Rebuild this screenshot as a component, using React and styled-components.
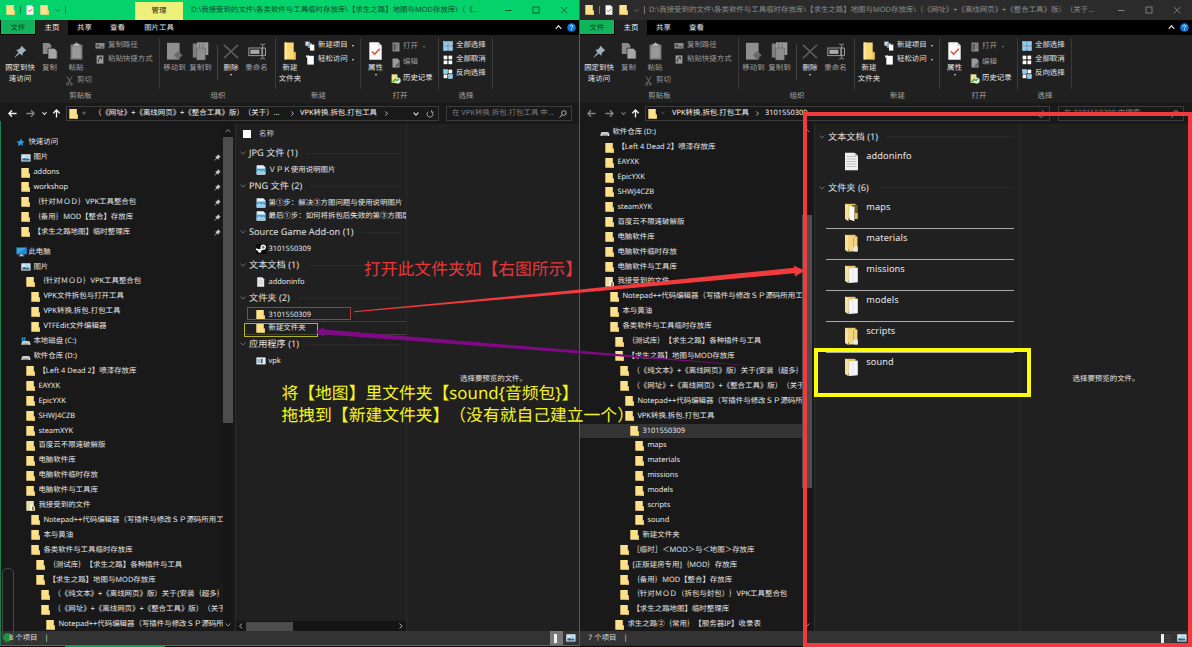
import React from 'react';
import styled, { createGlobalStyle, css } from 'styled-components';

const Global = createGlobalStyle`
  * { box-sizing: border-box; }
  html, body { margin: 0; padding: 0; background: #0b0f0d; }
  body {
    width: 1192px; height: 647px; overflow: hidden;
    font-family: "Noto Sans", "Noto Sans CJK SC", sans-serif;
    font-size: 7.45px; line-height: 11px; color: #e6e6e6;
    text-rendering: geometricPrecision;
    text-spacing-trim: space-all;
    white-space: nowrap;
  }
  svg { display: block; flex: none; }
`;

/* ---------- layout ---------- */
const Desktop = styled.div`
  position: relative; display: flex; width: 1192px; height: 647px; overflow: hidden;
`;
const Window = styled.section`
  width: ${p => p.$w}px; height: 646px; flex: none; display: flex; flex-direction: column;
  background: #191919; border-bottom: 1px solid ${p => (p.$active ? '#14905a' : '#2b2b2b')};
  box-shadow: ${p => (p.$active ? 'inset 1px 0 #1c7d50, 1px 0 #1c7d50' : 'none')};
  position: relative; z-index: ${p => (p.$active ? 1 : 0)};
`;
const TitleBar = styled.header`
  height: 20px; display: flex; align-items: center; padding-left: 6px;
  background: ${p => (p.$active ? '#04d36c' : '#2b2b2b')};
  color: ${p => (p.$active ? '#0a4a29' : '#8d8d8d')};
`;
const QuickTools = styled.div`
  display: flex; align-items: center; gap: 6px; width: ${p => p.$w}px; flex: none;
`;
const TinyBar = styled.i`width: 1px; height: 8px; background: ${p => p.$c}; margin: 0 -1px;`;
const ContextTab = styled.div`
  align-self: flex-end; width: 48px; height: 18px; line-height: 18px; text-align: center;
  background: #eff07c; color: #24240e; margin-right: 8px; flex: none;
`;
const Title = styled.div`width: ${p => p.$w}px; letter-spacing: ${p => p.$ls || 0}px; flex: none;`;
const WinControls = styled.div`
  margin-left: auto; display: flex; align-items: center; gap: 20px; padding-right: ${p => p.$pr}px;
`;
const TabBar = styled.nav`
  height: 15px; display: flex; align-items: stretch; background: #000; padding: 0 3px 0 1px;
`;
const Tab = styled.div`
  width: ${p => p.$w || 33}px; line-height: 16px; text-align: center; color: #e2e2e2;
  ${p => p.$kind === 'file' && css`height: 14px; background: #12b35b; color: #063c20; margin-right: 1px;`}
  ${p => p.$kind === 'active' && css`background: #202020; color: #fff;`}
`;
const TabEnd = styled.div`margin-left: auto; display: flex; align-items: center; gap: 5px;`;

const Ribbon = styled.div`height: 68px; flex: none; display: flex; background: #202020; padding-left: 1px;`;
const Group = styled.div`
  position: relative; width: ${p => p.$w}px; display: flex; flex-direction: column; flex: none;
  &::after { content: ''; position: absolute; right: 0; top: 3px; height: 51px; width: 1px; background: #3a3a3a; }
`;
const GroupBody = styled.div`height: 54px; display: flex; padding-left: ${p => p.$pl ?? 2}px;`;
const GroupLabel = styled.div`text-align: center; color: #a8a8a8; line-height: 14px; height: 14px;`;
const BigButton = styled.div`
  width: ${p => p.$w}px; display: flex; flex-direction: column; align-items: center; text-align: center;
  color: ${p => (p.$off ? '#a2a2a2' : '#e4e4e4')};
`;
const IconSlot = styled.div`height: 28px; padding-top: 4px; display: flex; justify-content: center; align-items: center;`;
const SmallCol = styled.div`
  display: flex; flex-direction: column; padding-top: ${p => p.$pt || 5}px; margin-left: ${p => p.$ml || 0}px; gap: ${p => p.$gap}px;
`;
const SmallButton = styled.div`
  display: flex; align-items: center; gap: ${p => p.$sp || 3}px; height: 11px; line-height: 11px;
  margin: ${p => p.$m || 0};
  color: ${p => (p.$off ? '#9c9c9c' : '#e4e4e4')};
`;
const InnerRule = styled.i`width: 1px; height: 35px; margin: 10px 1px 0 3px; background: #454545;`;
const Caret = styled.i`
  width: 0; height: 0; border: 1.5px solid transparent; border-top: 2px solid ${p => p.$c || '#ddd'};
  border-bottom: 0; margin: ${p => p.$m || '0 0 0 2px'};
`;

const AddressRow = styled.div`
  height: 18px; flex: none; display: flex; align-items: flex-start; padding: 3px 0 0 7px;
  background: #191919;
`;
const NavArrows = styled.div`display: flex; align-items: center; height: 14px; width: 59px; flex: none;`;
const ArrowSlot = styled.div`width: ${p => p.$w}px; display: flex; justify-content: center;`;
const Field = styled.div`
  height: 15px; width: ${p => p.$w}px; border: 1px solid #3c3c3c; display: flex; align-items: center;
  margin-right: ${p => p.$mr || 0}px; padding: 0 4px 0 ${p => p.$pl || 2}px; flex: none; color: ${p => p.$c || '#f2f2f2'};
  letter-spacing: ${p => p.$ls || 0}px;
`;
const Crumb = styled.span`width: ${p => p.$w}px; flex: none; color: ${p => p.$c || 'inherit'}; letter-spacing: ${p => p.$ls || 0}px;`;
const FieldEnd = styled.span`margin-left: auto; display: flex; gap: 7px; align-items: center;`;

const Body = styled.div`flex: 1; display: flex; min-height: 0;`;
const Tree = styled.aside`
  width: 223px; overflow: hidden; padding: ${p => p.$pt}px 0 0 1px; flex: none;
`;
const TreeRow = styled.div`
  height: 14.92px; display: flex; align-items: center; line-height: 14.92px;
  padding-left: ${p => 15 + p.$lvl * 5}px; margin-top: ${p => p.$mt || 0}px;
  background: ${p => (p.$sel ? '#333' : 'transparent')};
`;
const TreeIcon = styled.span`width: 12.4px; flex: none; display: flex; justify-content: flex-start;`;
const TreeText = styled.span`letter-spacing: ${p => p.$ls || 0}px;`;
const PinSlot = styled.span`margin-left: auto; padding-right: 2px;`;
const VScroll = styled.div`
  width: 10px; flex: none; display: flex; flex-direction: column; align-items: center; background: #171717;
  padding: 7px 0 3px;
`;
const VTrack = styled.div`flex: 1; width: 10px; padding-top: ${p => p.$top}px;`;
const VThumb = styled.div`height: ${p => p.$h}px; background: #4d4d4d;`;

const ListPane = styled.main`
  width: ${p => p.$w}px; margin-left: 2px; flex: none; display: flex; flex-direction: column;
  background: #202020; border-left: 1px solid #2c2c2c; border-right: 1px solid #2b2b2b; overflow: hidden;
  margin-top: 3px;
`;
const ColumnHead = styled.div`
  height: 19.3px; display: flex; align-items: center; gap: 8px; padding: 1px 0 0 7px; color: #cfcfcf;
`;
const ColumnSpace = styled.div`height: 2.5px; flex: none;`;
const CheckBox = styled.i`width: 8px; height: 8px; background: #fff;`;
const GroupHead = styled.div`
  height: 20px; display: flex; align-items: center; gap: 3px; font-size: ${p => p.$fs || 9.2}px; line-height: 20px;
  padding-left: 4px; color: #e2e2e2; letter-spacing: ${p => p.$ls || 0}px;
  &::after { content: ''; flex: 1; height: 1px; background: #2a2a2a; margin: 0 6px 0 5px; }
`;
const ListItem = styled.div`
  height: 13px; display: flex; align-items: center; line-height: 14px; margin-left: 9px; padding-left: 11px;
  box-shadow: ${p => (p.$line ? '0 0.6px #55584c' : 'none')};
`;
const ListIcon = styled.span`width: 12.5px; flex: none; display: flex; justify-content: flex-start;`;
const HScroll = styled.div`
  margin-top: auto; height: 10px; display: flex; align-items: center; background: #151515; padding: 0 2px;
`;
const HThumb = styled.i`width: 47px; height: 9px; background: #4d4d4d; margin: 0 auto 0 2px;`;
const Preview = styled.div`
  flex: 1; background: #202020; margin-top: 3px; text-align: center; padding: 249.5px 0 0 ${p => p.$pl}px;
`;
const TileItem = styled.div`
  height: 31px; display: flex; align-items: flex-start; margin: 0 5px 0 11px; padding-left: 18px;
  border-bottom: 1px solid ${p => (p.$line ? '#a9a9a9' : 'transparent')};
`;
const TileIcon = styled.span`width: 22.3px; padding-top: 5px; flex: none;`;
const TileText = styled.span`font-size: 9.2px; line-height: 18px; letter-spacing: 0.1px;`;

const StatusBar = styled.footer`
  height: 14px; flex: none; display: flex; align-items: center; background: #333; color: #dedede;
  margin: 0 0 0 1px; padding-left: ${p => p.$pl}px; gap: 7px;
`;
const StatusText = styled.span`position: relative; z-index: 1;`;
const ViewButtons = styled.div`margin-left: auto; display: flex; align-items: center; height: 14px; padding-right: ${p => p.$pr}px; gap: ${p => p.$gap}px;`;
const ViewButton = styled.div`
  width: 13px; height: 14px; display: flex; align-items: center; justify-content: center;
  background: ${p => (p.$on ? '#777' : 'transparent')};
`;

/* ---------- annotation layer ---------- */
const Annotations = styled.div`position: absolute; inset: 0; z-index: 2;`;
const Mark = styled.div`
  position: absolute; left: ${p => p.$x}px; top: ${p => p.$y}px; width: ${p => p.$w}px; height: ${p => p.$h}px;
  border: ${p => p.$b}px solid ${p => p.$c};
`;
const Note = styled.div`
  position: absolute; left: ${p => p.$x}px; top: ${p => p.$y}px; color: ${p => p.$c};
  font-size: 16.8px; line-height: 22px;
`;
const Arrows = styled.svg`position: absolute; left: 0; top: 0; pointer-events: none;`;
const Gauge = styled.div`
  position: absolute; left: 2px; top: 568px; width: 12px; height: 76px; border: 1.5px solid #4a4646; border-radius: 5px;
`;
const GaugeDot = styled.i`position: absolute; left: 3px; top: 633px; width: 9px; height: 9px; border-radius: 5px; background: #22913f;`;
const TaskLine = styled.i`position: absolute; left: 65px; top: 645px; width: 100px; height: 2px; background: #0a9c55;`;

/* ---------- icons ---------- */
const Folder = ({ w = 9, h = 10, kind }) => (
  <svg width={w} height={h} viewBox="0 0 9 10">
    <path d="M0.3 0H7.8V5.4H8.8V9.7H0.3Z" fill={kind === 'shared' ? '#ebe0a4' : '#fce08a'} />
    <path d="M7.5 5.4H8.8V9.7H6.4V9H7.5Z" fill="#f6d068" />
    {kind === 'shared' && <path d="M4.4 3.6H7.2V9.6H4.4Z" fill="#fff" />}
    {kind === 'shared' && <path d="M6 5.5H7.6V9.6H6Z" fill="#777" />}
  </svg>
);
const Star = () => (
  <svg width="9" height="9" viewBox="0 0 9 9"><path d="M5.2 0.6L6 3 8.6 3.4 6.5 5 7 7.8 4.6 6.5 1.8 8.6 2.5 5.6 0.4 3.6 3.6 3.3Z" fill="#2f9be6" /></svg>
);
const Picture = () => (
  <svg width="10" height="8" viewBox="0 0 10 8">
    <rect x=".3" y=".3" width="9.2" height="7.2" fill="#eef5fa" />
    <rect x="1.3" y="1.3" width="7.2" height="5.2" fill="#a9d6f2" />
    <path d="M1.3 6.5V4.9L3.4 4 5.5 5.1 7 4.6 8.5 5.2V6.5Z" fill="#33627f" /><circle cx="3" cy="2.7" r=".9" fill="#fff" />
  </svg>
);
const Monitor = () => (
  <svg width="11" height="10" viewBox="0 0 11 10"><path d="M.5.5H10.5V7.2H.5Z" fill="#38a7ea" /><path d="M.5 7.2L10.5.5V7.2Z" fill="#2389d2" /><path d="M4.4 7.2H6.6V8.4H8.3V9.3H2.7V8.4H4.4Z" fill="#b9d7ea" /></svg>
);
const Drive = ({ os }) => (
  <svg width="10" height="9" viewBox="0 0 10 9">
    <path d="M1.6 4L0.5 6V8H9.3V6L8.2 4Z" fill="#c9cdcf" /><path d="M.9 6.1H8.9V7.6H.9Z" fill="#eef0f0" /><rect x="1.6" y="6.7" width="6.3" height=".8" fill="#333" />
    {os && <path d="M.6.6H2.2V2.1H.6ZM2.6.6H4.4V2.1H2.6ZM.6 2.5H2.2V4H.6ZM2.6 2.5H4.4V4H2.6Z" fill="#2fa8e8" />}
  </svg>
);
const Pin = ({ s = 7, c = '#c6c6c6' }) => (
  <svg width={s} height={s} viewBox="0 0 12 12"><path d="M7 .6L11.4 5 10.2 5.6 8.2 7.4 7.7 10 5.3 7.8 1 11.6.5 11.2 4.2 6.7 2 4.5 4.7 4 6.5 1.9Z" fill={c} /></svg>
);
const Chevron = ({ dir = 'down', c = '#ccc', w = 5, sw = 1 }) => {
  const d = { down: 'M.6 1.5L3 4.2 5.4 1.5', up: 'M.6 4.2L3 1.5 5.4 4.2', left: 'M4.2.6L1.5 3 4.2 5.4', right: 'M1.5.6L4.2 3 1.5 5.4' }[dir];
  return <svg width={w} height={w} viewBox="0 0 6 6"><path d={d} fill="none" stroke={c} strokeWidth={sw} /></svg>;
};
const Arrow = ({ dir, c }) => {
  const d = { left: 'M8.6 4.5H1M4 1.3L.9 4.5 4 7.7', right: 'M.4 4.5H8M5 1.3L8.1 4.5 5 7.7', up: 'M4.5 8.5V1M1.3 4.2L4.5 1 7.7 4.2' }[dir];
  return <svg width="9" height="9" viewBox="0 0 9 9"><path d={d} fill="none" stroke={c} strokeWidth="1.3" /></svg>;
};
const Check = ({ w = 8, h = 10 }) => (
  <svg width={w} height={h} viewBox="0 0 13 18"><path d="M.3.3H9.5L12.7 3.5V17.7H.3Z" fill="#fafafa" /><path d="M9.5.3V3.5H12.7Z" fill="#bbb" /><path d="M3 9.5L5.6 12.2 10.8 6.8" fill="none" stroke="#d3552e" strokeWidth="1.6" /></svg>
);
const Copy = () => (
  <svg width="16" height="18" viewBox="0 0 16 18"><path d="M.8 1H7L9.3 3.3V12H.8Z" fill="#8a8a8a" /><path d="M6 6.2H12.5L15.2 9V17H6Z" fill="#a6a6a6" stroke="#202020" strokeWidth=".7" /></svg>
);
const Paste = () => (
  <svg width="13" height="18" viewBox="0 0 13 18"><path d="M.6 2.6H12.4V17.6H.6Z" fill="#7d7d7d" /><path d="M2.2 5H10.8V16H2.2Z" fill="#999" /><path d="M3.5 1.8H5L6.5.3 8 1.8H9.5V4.2H3.5Z" fill="#b0b0b0" /></svg>
);
const Scissors = () => (
  <svg width="7" height="10" viewBox="0 0 7 10"><path d="M1 .5L4.9 7M6 .5L2 7" stroke="#777" fill="none" strokeWidth=".9" /><circle cx="1.6" cy="8.2" r="1.1" stroke="#777" fill="none" strokeWidth=".8" /><circle cx="5.3" cy="8.2" r="1.1" stroke="#777" fill="none" strokeWidth=".8" /></svg>
);
const PathIcon = () => (
  <svg width="10" height="8" viewBox="0 0 10 8"><rect x=".5" y="1" width="9" height="5.6" fill="#8b8b8b" /><path d="M1.8 2.6L2.6 5 3.4 2.6 4.2 5M5.4 5H8.4" stroke="#333" fill="none" strokeWidth=".8" /></svg>
);
const ShortcutIcon = () => (
  <svg width="10" height="9" viewBox="0 0 10 9"><rect x="1.6" y=".4" width="6.8" height="8.2" fill="#9a9a9a" /><path d="M3.3 7V4.3L6.3 2.2M4.2 2.2H6.4V4.4" stroke="#2a2a2a" fill="none" strokeWidth=".9" /></svg>
);
const MoveTo = () => (
  <svg width="17" height="19" viewBox="0 0 17 19"><path d="M1 .8H13.6V17.6H1Z" fill="#8f8f8f" /><path d="M12.2 9L16.6 13.3 12.2 17.6 7.8 13.3Z" fill="#6a6a6a" /></svg>
);
const CopyTo = () => (
  <svg width="17" height="19" viewBox="0 0 17 19"><path d="M.8 1.5H6V15.6H.8Z" fill="#7f7f7f" /><path d="M5 .3H16.3V13H5Z" fill="#999" /><path d="M7.7 1.5V10M11 1.5V8" stroke="#6c6c6c" strokeWidth=".9" /><path d="M4.6 6H13.4V18H4.6Z" fill="#8e8e8e" stroke="#555" strokeWidth=".5" /></svg>
);
const DeleteX = () => (
  <svg width="16" height="15" viewBox="0 0 16 15"><path d="M1 .8L15 14.2M15 .8L1 14.2" stroke="#5c5c5c" strokeWidth="1.6" /></svg>
);
const Rename = () => (
  <svg width="18" height="17" viewBox="0 0 18 17"><rect x=".8" y="5" width="13" height="7.6" fill="none" stroke="#999" strokeWidth="1" /><rect x="2.4" y="6.7" width="9" height="4.2" fill="#aaa" /><path d="M12.3 1Q14.4 1 14.6 2.4 14.8 1 17 1M14.6 2.3V14.7M12.3 16Q14.4 16 14.6 14.6 14.8 16 17 16M14.6 5H17.5V12.6H14.6" stroke="#999" fill="none" strokeWidth="1" /></svg>
);
const NewFolder = () => (
  <svg width="12" height="18" viewBox="0 0 12 18"><path d="M.6.4H9.7V11H11.5V17.4H.6Z" fill="#fbd976" /><path d="M.6.4H2.6V17.4H.6Z" fill="#ffe9a6" /><path d="M9.7 9.8H11.6V17.4H8V16H9.7Z" fill="#f2c14b" /></svg>
);
const NewItem = () => (
  <svg width="10" height="10" viewBox="0 0 10 10"><path d="M.4.6H4.6V4.8H.4Z" fill="#cfdde6" /><path d="M2.8 2.2H7V6.8H2.8Z" fill="#8aa4b4" /><path d="M5 3.6H9.3V9.6H5Z" fill="#fff" /></svg>
);
const EasyAccess = () => (
  <svg width="10" height="10" viewBox="0 0 10 10"><path d="M2.3 .8H8.8V9.6H2.3Z" fill="#fff" /><path d="M.8.6H4.2L3 2.6H1.4Z" fill="#e9f2f8" /></svg>
);
const OpenIcon = () => (
  <svg width="8" height="10" viewBox="0 0 8 10"><rect x=".5" y=".5" width="7" height="9" fill="#8d8d8d" /><path d="M2 2H3.4V8H2ZM4.6 2H6.3M4.6 4H6.3M4.6 6H6.3" stroke="#555" fill="#555" strokeWidth=".7" /></svg>
);
const EditIcon = () => (
  <svg width="8" height="10" viewBox="0 0 8 10"><path d="M.5.5H5.6L7.5 2.4V9.5H.5Z" fill="#9b9b9b" /><path d="M3 8L7.7 3.6V6.5L5 9Z" fill="#606060" /></svg>
);
const HistoryIcon = () => (
  <svg width="10" height="10" viewBox="0 0 10 10"><path d="M.6.3H6.4V9H.6Z" fill="#f1e387" /><circle cx="6.6" cy="6.6" r="3" fill="#e9f4e6" stroke="#8eb787" strokeWidth=".5" /><path d="M1.5 8.3L4 5.4 6.3 6.6 7.8 4.6" stroke="#349a3b" strokeWidth="1.2" fill="none" /></svg>
);
const SelectIcon = ({ c }) => (
  <svg width="10" height="10" viewBox="0 0 10 10">
    {[[0.5, 0.5], [5.4, 0.5], [0.5, 5.4], [5.4, 5.4]].map(([x, y], i) => (
      <rect key={i} x={x + (c[i] ? 0 : 0.4)} y={y + (c[i] ? 0 : 0.4)} width={c[i] ? 4.2 : 3.2} height={c[i] ? 4.2 : 3.2}
        fill={c[i] ? '#8ccbf4' : '#fff'} stroke={c[i] ? '#c9e7fa' : '#fff'} strokeWidth=".4" />
    ))}
  </svg>
);
const Help = () => (
  <svg width="9" height="9" viewBox="0 0 9 9"><circle cx="4.5" cy="4.5" r="4.3" fill="#1177d8" /><path d="M3.1 3.4Q3.3 2.1 4.6 2.1 5.9 2.2 5.8 3.3 5.7 4 4.6 4.7V5.4M4.6 6.2V7.1" stroke="#fff" fill="none" strokeWidth=".9" /></svg>
);
const Doc = ({ c = '#e9e9e9' }) => (
  <svg width="9" height="10" viewBox="0 0 9 10"><path d="M1.2.3H6.3L8.2 2.2V9.7H1.2Z" fill={c} /><path d="M2.3 3.4H7M2.3 5H7M2.3 6.6H7" stroke="#c4c4c4" strokeWidth=".5" /></svg>
);
const ImageDoc = () => (
  <svg width="10" height="10" viewBox="0 0 10 10"><path d="M.6.2H7.3L9.4 2.2V9.8H.6Z" fill="#e4f2fa" /><path d="M.6 3.6H9.4V8.8H.6Z" fill="#4aa3d3" /><path d="M.6 7.2L3.2 5 5.3 6.7 7 5.6 9.4 7.2V8.8H.6Z" fill="#9fd2ec" /></svg>
);
const Steam = () => (
  <svg width="11" height="10" viewBox="0 0 11 10"><rect width="10.6" height="10" rx="1" fill="#0a0a0a" /><circle cx="7.2" cy="3.2" r="2.1" fill="#777" stroke="#fff" strokeWidth="1.3" /><path d="M0 5L3.6 6.6 6 4.6" stroke="#fff" strokeWidth="1.8" fill="none" /><circle cx="3.7" cy="7" r="1.8" fill="#fff" /></svg>
);
const AppIcon = () => (
  <svg width="10" height="8" viewBox="0 0 10 8"><rect x=".4" y=".4" width="9.2" height="7" fill="#e9eef2" /><rect x="1.4" y="2" width="2.6" height="4" fill="#7fbbe2" /><rect x="4.8" y="1.8" width="1.8" height="4.4" fill="#3a5668" /></svg>
);
const TileFolder = ({ kind }) => (
  <svg width="15" height="19" viewBox="0 0 15 19">
    <path d="M1 .8H11.5V15.5H1Z" fill="#e9c866" />
    <path d="M1 .8L4.5 2.2V18.2L1 16Z" fill="#f8e29b" />
    {kind === 'gear' && <path d="M5 2.4H13.4V17.5H5Z" fill="#f4d680" />}
    {kind === 'gear' && <path d="M9.6 3V13" stroke="#b79c4c" strokeWidth=".8" />}
    {kind === 'gear' && <path d="M10.4 12.5H13.8V17.4H10.8L8.6 15.8Z" fill="#e8e8e4" />}
    {kind === 'dark' && <path d="M8 2H13.6V15H8Z" fill="#6d5e1e" />}
    {kind === 'dark' && <path d="M11 10H13.8V16H11Z" fill="#dcb84f" />}
    {kind === 'dark' && <path d="M5.4 3.2L10.4 3.8V18.3L5.4 16.5Z" fill="#fff" />}
    {kind === 'page' && <path d="M5 3.4L13.8 2.4V17.2L5 18Z" fill="#f4f6fb" />}
    {kind === 'page' && <path d="M5 3.4V18M9 3V17.6" stroke="#d8dbe4" strokeWidth=".7" />}
  </svg>
);
const TileDoc = () => (
  <svg width="15" height="19" viewBox="0 0 15 19"><path d="M1 .8H10.5L14 4V18.3H1Z" fill="#f0f0f0" /><path d="M2.5 4.5H12.4M2.5 7H12.4M2.5 9.5H12.4M2.5 12H12.4M2.5 14.5H12.4" stroke="#b2b2b2" strokeWidth=".8" /><path d="M10.5.8V4H14Z" fill="#c8c8c8" /></svg>
);
const DetailsIcon = ({ dots }) => (
  <svg width={dots ? 10 : 5} height="9" viewBox={dots ? '0 0 10 9' : '0 0 5 9'}><rect width="3" height="9" fill="#f0f0f0" />{dots && <path d="M4.5 2H10M4.5 4.5H10M4.5 7H10" stroke="#777" strokeDasharray="1 1" strokeWidth=".8" />}</svg>
);

/* ---------- window parts ---------- */
const Controls = ({ c, pr }) => (
  <WinControls $pr={pr}>
    <svg width="8" height="8"><path d="M1 4.5H7.5" stroke={c} /></svg>
    <svg width="8" height="8"><rect x="1" y="1" width="6" height="6" fill="none" stroke={c} strokeWidth=".9" /></svg>
    <svg width="8" height="8"><path d="M1 1L7.3 7.3M7.3 1L1 7.3" stroke={c} strokeWidth=".9" /></svg>
  </WinControls>
);

const RibbonBar = () => (
  <Ribbon>
    <Group $w={159}>
      <GroupBody>
        <BigButton $w={34}><IconSlot><Pin s={13} c="#9fb0bd" /></IconSlot>固定到快<br />速访问</BigButton>
        <BigButton $w={25} $off><IconSlot><Copy /></IconSlot>复制</BigButton>
        <BigButton $w={28} $off>
          <IconSlot><Paste /></IconSlot>粘贴
          <SmallButton $off $sp={4} $m="1px 0 0 6px"><Scissors />剪切</SmallButton>
        </BigButton>
        <SmallCol $gap={3} $ml={5}>
          <SmallButton $off><PathIcon />复制路径</SmallButton>
          <SmallButton $off><ShortcutIcon />粘贴快捷方式</SmallButton>
        </SmallCol>
      </GroupBody>
      <GroupLabel>剪贴板</GroupLabel>
    </Group>
    <Group $w={116}>
      <GroupBody>
        <BigButton $w={25} $off><IconSlot><MoveTo /></IconSlot>移动到</BigButton>
        <BigButton $w={27} $off><IconSlot><CopyTo /></IconSlot>复制到</BigButton>
        <InnerRule />
        <BigButton $w={24}><IconSlot><DeleteX /></IconSlot>删除<Caret $m="0" /></BigButton>
        <BigButton $w={27} $off><IconSlot><Rename /></IconSlot>重命名</BigButton>
      </GroupBody>
      <GroupLabel>组织</GroupLabel>
    </Group>
    <Group $w={85}>
      <GroupBody $pl={1}>
        <BigButton $w={26}><IconSlot><NewFolder /></IconSlot>新建<br />文件夹</BigButton>
        <SmallCol $gap={3} $ml={2}>
          <SmallButton><NewItem />新建项目<Caret $m="0 0 0 1px" /></SmallButton>
          <SmallButton><EasyAccess />轻松访问<Caret $m="0 0 0 1px" /></SmallButton>
        </SmallCol>
      </GroupBody>
      <GroupLabel>新建</GroupLabel>
    </Group>
    <Group $w={78}>
      <GroupBody>
        <BigButton $w={25}><IconSlot><Check w={13} h={18} /></IconSlot>属性<Caret $m="0" /></BigButton>
        <SmallCol $gap={5} $pt={6} $ml={4}>
          <SmallButton $off><OpenIcon />打开<Caret $c="#777" /></SmallButton>
          <SmallButton $off><EditIcon />编辑</SmallButton>
          <SmallButton $sp={2} $m="0 0 0 -1px"><HistoryIcon />历史记录</SmallButton>
        </SmallCol>
      </GroupBody>
      <GroupLabel>打开</GroupLabel>
    </Group>
    <Group $w={54}>
      <GroupBody>
        <SmallCol $gap={3} $ml={2}>
          <SmallButton><SelectIcon c={[1, 1, 1, 1]} />全部选择</SmallButton>
          <SmallButton><SelectIcon c={[0, 0, 0, 0]} />全部取消</SmallButton>
          <SmallButton><SelectIcon c={[1, 0, 0, 1]} />反向选择</SmallButton>
        </SmallCol>
      </GroupBody>
      <GroupLabel>选择</GroupLabel>
    </Group>
  </Ribbon>
);

const Quick = ({ w, c }) => (
  <QuickTools $w={w}>
    <Folder /><TinyBar $c={c} /><Check /><Folder />
    <Chevron w={5} c={c} /><TinyBar $c={c} />
  </QuickTools>
);
const Arrows3 = ({ back }) => (
  <NavArrows>
    <ArrowSlot $w={12}><Arrow dir="left" c={back} /></ArrowSlot>
    <ArrowSlot $w={25}><Arrow dir="right" c="#858585" /></ArrowSlot>
    <ArrowSlot $w={4}><Chevron c={back} w={5} sw={1.3} /></ArrowSlot>
    <ArrowSlot $w={21}><Arrow dir="up" c="#f4f4f4" /></ArrowSlot>
  </NavArrows>
);
const Refresh = ({ c }) => (
  <svg width="8" height="8" viewBox="0 0 8 8"><path d="M5.8 1.7A3 3 0 1 1 2.2 1.7M5.6.2V2.2H7.4" stroke={c} fill="none" strokeWidth=".9" /></svg>
);
const Magnifier = ({ c }) => (
  <svg width="8" height="8" viewBox="0 0 8 8"><circle cx="4.9" cy="3" r="2.3" stroke={c} fill="none" strokeWidth=".9" /><path d="M3.2 4.7L.6 7.5" stroke={c} strokeWidth="1" /></svg>
);

const icons = {
  star: <Star />, pic: <Picture />, pc: <Monitor />, c: <Drive os />, d: <Drive />,
  shared: <Folder kind="shared" />, f: <Folder />,
};
const commonTree = [
  [1, 'd', '软件仓库 (D:)'], [2, 'f', '【Left 4 Dead 2】喷漆存放库'], [2, 'f', 'EAYXK'], [2, 'f', 'EpicYXK'],
  [2, 'f', 'SHWJ4CZB'], [2, 'f', 'steamXYK'], [2, 'f', '百度云不限速破解版'], [2, 'f', '电脑软件库'],
  [2, 'f', '电脑软件临时存放'], [2, 'f', '电脑软件与工具库'], [2, 'shared', '我接受到的文件'],
  [3, 'f', 'Notepad++代码编辑器（写插件与修改ＳＰ源码所用工'], [3, 'f', '本与黄油'],
  [3, 'f', '各类软件与工具临时存放库'], [4, 'f', '｛测试库｝【求生之路】各种插件与工具'],
  [4, 'f', '【求生之路】地图与MOD存放库'], [5, 'f', '（《纯文本》+《离线网页》版）关于{安装｛超多｝'],
  [5, 'f', '（《网址》+《离线网页》+《整合工具》版）（关于'],
  [6, 'f', 'Notepad++代码编辑器（写插件与修改ＳＰ源码所'],
];
const leftTree = [
  [0, 'star', '快速访问'], [1, 'pic', '图片', { pin: 1 }], [1, 'f', 'addons', { pin: 1 }], [1, 'f', 'workshop', { pin: 1 }],
  [1, 'f', '｛针对ＭＯＤ｝VPK工具整合包', { pin: 1 }], [1, 'f', '｛备用｝MOD【整合】存放库', { pin: 1 }],
  [1, 'f', '【求生之路地图】临时整理库', { pin: 1 }],
  [0, 'pc', '此电脑', { mt: 5 }], [1, 'pic', '图片'], [2, 'f', '｛针对ＭＯＤ｝VPK工具整合包'],
  [3, 'f', 'VPK文件拆包与打开工具'], [3, 'f', 'VPK转换.拆包.打包工具'], [3, 'f', 'VTFEdit文件编辑器'],
  [1, 'c', '本地磁盘 (C:)'], ...commonTree,
];
const rightTree = [
  ...commonTree, [6, 'f', 'VPK转换.拆包.打包工具'], [7, 'f', '3101550309', { sel: 1 }],
  ...['maps', 'materials', 'missions', 'models', 'scripts', 'sound'].map(n => [8, 'f', n]),
  [7, 'f', '新建文件夹'], [5, 'f', '［临时］＜MOD＞与＜地图＞存放库'], [5, 'f', '[正版建房专用]｛MOD｝存放库'],
  [5, 'f', '｛备用｝MOD【整合】存放库'], [5, 'f', '｛针对ＭＯＤ（拆包与封包）｝VPK工具整合包'],
  [5, 'f', '【求生之路地图】临时整理库'], [4, 'f', '求生之路②｛常用｝【服务器IP】收录表'],
];
const TreeView = ({ rows, pt }) => (
  <Tree $pt={pt}>
    {rows.map(([lvl, icon, text, o = {}], i) => (
      <TreeRow key={i} $lvl={lvl} $mt={o.mt} $sel={o.sel}>
        <TreeIcon>{icons[icon]}</TreeIcon><TreeText>{text}</TreeText>
        {o.pin && <PinSlot><Pin /></PinSlot>}
      </TreeRow>
    ))}
  </Tree>
);
const Scroller = ({ top, h }) => (
  <VScroll><Chevron dir="up" c="#8a8a8a" w={6} /><VTrack $top={top}><VThumb $h={h} /></VTrack><Chevron c="#8a8a8a" w={6} /></VScroll>
);
const groups = [
  ['JPG 文件 (1)', [[<ImageDoc />, 'ＶＰＫ使用说明图片']]],
  ['PNG 文件 (2)', [[<ImageDoc />, '第①步：解决③方图问题与使用说明图片'], [<ImageDoc />, '最后①步：如何将拆包后失效的第③方图层']]],
  ['Source Game Add-on (1)', [[<Steam />, '3101550309']]],
  ['文本文档 (1)', [[<Doc />, 'addoninfo']]],
  ['文件夹 (2)', [[<Folder />, '3101550309', 1], [<Folder />, '新建文件夹', 1]]],
  ['应用程序 (1)', [[<AppIcon />, 'vpk']]],
];
const tiles = [['maps', 'dark'], ['materials', 'gear'], ['missions', 'page'], ['models', 'page'], ['scripts', 'gear'], ['sound', 'page']];

const LeftWindow = () => (
  <Window $w={579} $active>
    <TitleBar $active>
      <Quick w={129} c="#0a7f45" />
      <ContextTab>管理</ContextTab>
      <Title $w={293}>D:\我接受到的文件\各类软件与工具临时存放库\【求生之路】地图与MOD存放库\（《...</Title>
      <Controls c="#0a5a30" pr={11} />
    </TitleBar>
    <TabBar>
      <Tab $w={34} $kind="file">文件</Tab><Tab $kind="active" $w={32}>主页</Tab><Tab>共享</Tab><Tab>查看</Tab><Tab $w={50}>图片工具</Tab>
      <TabEnd><Chevron dir="up" w={7} c="#ddd" /><Help /></TabEnd>
    </TabBar>
    <RibbonBar />
    <AddressRow>
      <Arrows3 back="#f4f4f4" />
      <Field $w={373} $mr={7}>
        <Crumb $w={13}><Folder /></Crumb><Crumb $w={12} $c="#999">«</Crumb>
        <Crumb $w={196}>（《网址》+《离线网页》+《整合工具》版）（关于）...</Crumb>
        <Crumb $w={10}><Chevron dir="right" /></Crumb><Crumb $w={84}>VPK转换.拆包.打包工具</Crumb><Chevron dir="right" />
        <FieldEnd><Chevron w={6} sw={1.2} /><Refresh c="#aaa" /></FieldEnd>
      </Field>
      <Field $w={126} $pl={5} $c="#7c7c7c">在 VPK转换.拆包.打包工具 中...<FieldEnd><Magnifier c="#bbb" /></FieldEnd></Field>
    </AddressRow>
    <Body>
      <TreeView rows={leftTree} pt={14.3} />
      <Scroller top={3} h={286} />
      <ListPane $w={172}>
        <ColumnHead><CheckBox />名称</ColumnHead>
        {groups.map(([name, items]) => (
          <React.Fragment key={name}>
            <GroupHead><Chevron c="#6a6a6a" w={6} />{name}</GroupHead>
            {items.map(([icon, text, line], i) => (
              <ListItem key={i} $line={line}><ListIcon>{icon}</ListIcon>{text}</ListItem>
            ))}
          </React.Fragment>
        ))}
        <HScroll><Chevron dir="left" w={6} c="#aaa" /><HThumb /><Chevron dir="right" w={6} c="#aaa" /></HScroll>
      </ListPane>
      <Preview $pl={1}>选择要预览的文件。</Preview>
    </Body>
    <StatusBar $pl={8}>
      <StatusText>8 个项目</StatusText><span>|</span>
      <ViewButtons $pr={2} $gap={1}><ViewButton $on><DetailsIcon /></ViewButton><ViewButton><Picture /></ViewButton></ViewButtons>
    </StatusBar>
    <Gauge /><GaugeDot />
  </Window>
);

const RightWindow = () => (
  <Window $w={613}>
    <TitleBar>
      <Quick w={64} c="#777" />
      <Title $w={456}>D:\我接受到的文件\各类软件与工具临时存放库\【求生之路】地图与MOD存放库\（《网址》+《离线网页》+《整合工具》版）（关于...</Title>
      <Controls c="#858585" pr={11} />
    </TitleBar>
    <TabBar>
      <Tab $w={34} $kind="file">文件</Tab><Tab $kind="active" $w={32}>主页</Tab><Tab>共享</Tab><Tab>查看</Tab>
      <TabEnd><Chevron dir="up" w={7} c="#ddd" /><Help /></TabEnd>
    </TabBar>
    <RibbonBar />
    <AddressRow>
      <Arrows3 back="#858585" />
      <Field $w={405} $mr={8}>
        <Crumb $w={13}><Folder /></Crumb><Crumb $w={11} $c="#555">«</Crumb>
        <Crumb $w={83}>VPK转换.拆包.打包工具</Crumb><Crumb $w={10}><Chevron dir="right" /></Crumb>3101550309
        <FieldEnd><Refresh c="#777" /></FieldEnd>
      </Field>
      <Field $w={126} $pl={5} $c="#7c7c7c">在 3101550309 中搜索<FieldEnd><Magnifier c="#999" /></FieldEnd></Field>
    </AddressRow>
    <Body>
      <TreeView rows={rightTree} pt={4.4} />
      <Scroller top={81} h={273} />
      <ListPane $w={206}>
        <ColumnSpace />
        <GroupHead><Chevron c="#6a6a6a" w={6} />文本文档 (1)</GroupHead>
        <TileItem><TileIcon><TileDoc /></TileIcon><TileText>addoninfo</TileText></TileItem>
        <GroupHead><Chevron c="#6a6a6a" w={6} />文件夹 (6)</GroupHead>
        {tiles.map(([n, k], i) => (
          <TileItem key={n} $line={i < 5}><TileIcon><TileFolder kind={k} /></TileIcon><TileText>{n}</TileText></TileItem>
        ))}
      </ListPane>
      <Preview $pl={0}>选择要预览的文件。</Preview>
    </Body>
    <StatusBar $pl={8}>
      <StatusText>7 个项目</StatusText><span>|</span>
      <ViewButtons $pr={4} $gap={3}><ViewButton><DetailsIcon dots /></ViewButton><ViewButton><Picture /></ViewButton></ViewButtons>
    </StatusBar>
  </Window>
);

export default function App() {
  return (
    <Desktop>
      <Global />
      <LeftWindow />
      <RightWindow />
      <Annotations>
        <TaskLine />
        <Mark $x={803} $y={112} $w={389} $h={535} $b={4.5} $c="#f03a3e" />
        <Mark $x={814} $y={348} $w={217} $h={49} $b={4} $c="#fdfd0a" />
        <Mark $x={247} $y={307} $w={104} $h={13} $b={1} $c="#a5393c" />
        <Mark $x={244} $y={323} $w={74} $h={14} $b={1} $c="#b3b32a" />
        <Arrows width="1192" height="647">
          <path d="M354 311.2L580 289.6 794 267.8 793.5 265.5 805 270.5 795 276.5 794.6 273.2 580 292.8 354 312.2Z" fill="#f03a3e" />
          <path d="M760 366.4L580 350.8 324 329.6 324.3 327.2 315 331.8 323.2 336.6 323.5 334.2 580 353.4Z" fill="#800a86" />
        </Arrows>
        <Note $x={364} $y={258} $c="#e8373b">打开此文件夹如【右图所示】</Note>
        <Note $x={281.5} $y={381.5} $c="#f5f51e">将【地图】里文件夹【sound{'{'}音频包{'}'}】<br />拖拽到【新建文件夹】（没有就自己建立一个）</Note>
      </Annotations>
    </Desktop>
  );
}
